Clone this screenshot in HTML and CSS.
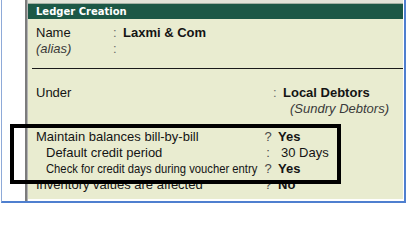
FILE: index.html
```html
<!DOCTYPE html>
<html>
<head>
<meta charset="utf-8">
<title>Ledger Creation</title>
<link rel="stylesheet" href="styles.css">
</head>
<body>
<div class="frame">
  <div class="gutter"></div>
  <div class="bar"></div>
  <div class="panel">
    <div class="topstrip"></div>
    <div class="title">Ledger Creation</div>
    <div class="content">
      <div class="row"><span class="lbl w-name">Name</span><span class="mk">:</span><span class="val b">Laxmi &amp; Com</span></div>
      <div class="row"><span class="lbl w-name it">(alias)</span><span class="mk">:</span></div>
      <div class="rule"></div>
      <div class="row under"><span class="lbl w-under">Under</span><span class="mk">:</span><span class="val b">Local Debtors</span></div>
      <div class="row"><span class="sub it">(Sundry Debtors)</span></div>
      <div class="group">
        <div class="row"><span class="lbl w-grp">Maintain balances bill-by-bill</span><span class="mk mk-c">?</span><span class="val gv b">Yes</span></div>
        <div class="row"><span class="lbl w-grp ind">Default credit period</span><span class="mk mk-c">:</span><span class="val gv pad">30 Days</span></div>
        <div class="row"><span class="lbl w-grp ind"><span class="squeeze">Check for credit days during voucher entry</span></span><span class="mk mk-c">?</span><span class="val gv b">Yes</span></div>
        <div class="row"><span class="lbl w-grp">Inventory values are affected</span><span class="mk mk-c">?</span><span class="val gv b">No</span></div>
      </div>
    </div>
  </div>
  <div class="rpad"></div>
  <div class="callout"></div>
</div>
</body>
</html>
```

FILE: styles.css
```css
html, body {
  margin: 0;
  padding: 0;
  background: #ffffff;
}

body {
  width: 407px;
  height: 207px;
  overflow: hidden;
  font-family: "Liberation Sans", Arial, sans-serif;
  font-size: 13px;
  color: #141414;
}

.frame {
  position: relative;
  display: flex;
  margin-left: 1px;
  width: 402px;
  height: 201px;
  border-left: 1px solid #8eaad8;
  border-right: 2px solid #4f7fcf;
  border-bottom: 2px solid #4f7fcf;
  background: #ffffff;
}

.gutter {
  width: 23px;
  background: #ffffff;
}

.bar {
  width: 2px;
  background: #7c7c7c;
  border-right: 1px solid #b4b4b4;
}

.panel {
  flex: 1;
  display: flex;
  flex-direction: column;
  height: 199px;
  background: #e9ecd0;
}

.rpad {
  width: 1px;
  background: #ffffff;
}

.topstrip {
  height: 3px;
  background: #e2e4d8;
  border-bottom: 1px solid #a4b2a4;
}

.title {
  height: 15px;
  line-height: 16px;
  background: #1c5846;
  color: #ffffff;
  font-family: "DejaVu Sans", Verdana, sans-serif;
  font-weight: bold;
  font-size: 10px;
  padding-left: 8px;
}

.content {
  padding-top: 6px;
  padding-left: 8px;
}

.row {
  display: flex;
  height: 16px;
  line-height: 16px;
  white-space: nowrap;
}

.lbl {
  flex: none;
  box-sizing: border-box;
}

.w-name {
  width: 77px;
}

.w-under {
  width: 237px;
}

.w-grp {
  width: 226px;
}

.ind {
  padding-left: 10px;
}

.mk {
  flex: none;
  width: 10px;
  color: #6a6a6a;
}

.mk-c {
  width: 12px;
  text-align: center;
  color: #4a4a4a;
}

.val {
  flex: none;
}

.gv {
  margin-left: 4px;
}

.pad {
  padding-left: 3px;
}

.b {
  font-weight: bold;
}

.it {
  font-style: italic;
  color: #3a3a3a;
}

.sub {
  margin-left: 254px;
}

.rule {
  height: 1px;
  margin-top: 11px;
  margin-left: -4px;
  background: #1a1a1a;
}

.under {
  margin-top: 16px;
}

.group {
  margin-top: 12px;
}

.squeeze {
  display: inline-block;
  transform: scaleX(0.865);
  transform-origin: left center;
}

.callout {
  position: absolute;
  left: 8px;
  top: 124px;
  width: 331px;
  height: 60px;
  box-sizing: border-box;
  border: 4px solid #000000;
}
```
